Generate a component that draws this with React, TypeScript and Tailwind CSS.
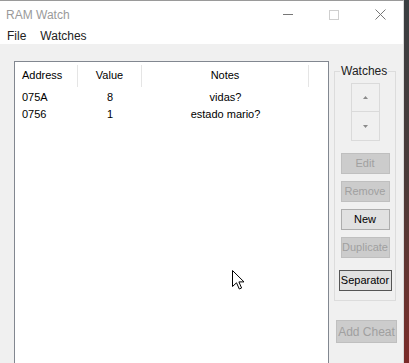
import React from "react";

const font = { fontFamily: '"Liberation Sans", Arial, sans-serif' };

const rows = [
  { address: "075A", value: "8", notes: "vidas?" },
  { address: "0756", value: "1", notes: "estado mario?" },
];

type BtnProps = { label: string; disabled?: boolean; isDefault?: boolean; className?: string };

function Btn({ label, disabled, isDefault, className = "" }: BtnProps) {
  let look = "bg-[#e1e1e1] border-[#adadad] text-black";
  if (disabled) look = "bg-[#cccccc] border-[#bfbfbf] text-[#a0a0a0]";
  if (isDefault) look = "bg-[#e1e1e1] border-[#555555] text-black";
  return (
    <div className={`flex items-center justify-center border text-[11px] leading-none ${look} ${className}`}>
      {label}
    </div>
  );
}

function Cursor() {
  return (
    <svg className="absolute left-[232px] top-[269px]" width="13" height="20" viewBox="0 0 13 20" aria-hidden="true">
      <path
        d="M0.5 0.5 L0.5 16.5 L4.5 12.8 L7.3 19 L9.6 18 L6.9 11.9 L12 11.9 Z"
        fill="#ffffff"
        stroke="#000000"
        strokeWidth="1"
        strokeLinejoin="miter"
      />
    </svg>
  );
}

export default function App() {
  return (
    <div className="flex w-[409px] h-[363px] overflow-hidden bg-[#2b2b2b]" style={font}>
      <div className="relative flex flex-col w-[404px] h-full border-t border-[#9a9a9a] border-r border-r-[#d9d9d9] bg-white">
        {/* title bar */}
        <div className="flex items-center h-[27px] shrink-0">
          <span className="pl-[6px] text-[12px] text-[#9a9a9a] flex-1">RAM Watch</span>
          <div className="flex h-full">
            <div className="w-[46px] flex items-center justify-center">
              <div className="w-[10px] h-px bg-[#777777]" />
            </div>
            <div className="w-[46px] flex items-center justify-center">
              <div className="w-[10px] h-[10px] border border-[#cfcfcf]" />
            </div>
            <div className="w-[46px] flex items-center justify-center">
              <svg width="11" height="11" viewBox="0 0 11 11" aria-hidden="true">
                <path d="M0.5 0.5 L10.5 10.5 M10.5 0.5 L0.5 10.5" stroke="#777777" strokeWidth="1" />
              </svg>
            </div>
          </div>
        </div>

        {/* menu bar */}
        <div className="flex items-center h-[16px] shrink-0 text-[12px] text-[#222222]">
          <span className="pl-[7px]">File</span>
          <span className="pl-[14px]">Watches</span>
        </div>

        {/* client */}
        <div className="flex flex-1 bg-[#f0f0f0] pl-[14px] pt-[17px]">
          {/* list */}
          <div className="w-[315px] h-[320px] shrink-0 bg-white border-l border-t border-r border-l-[#828790] border-t-[#828790] border-r-[#828790] text-[11px] text-black">
            <div className="flex h-[27px] items-center">
              <div className="w-[63px] h-[22px] flex items-center pl-[7px] border-r border-[#e5e5e5]">Address</div>
              <div className="w-[64px] h-[22px] flex items-center justify-center border-r border-[#e5e5e5]">Value</div>
              <div className="w-[167px] h-[22px] flex items-center justify-center border-r border-[#e5e5e5]">Notes</div>
            </div>
            {rows.map((r) => (
              <div key={r.address} className="flex h-[16.5px] items-center">
                <div className="w-[63px] pl-[7px]">{r.address}</div>
                <div className="w-[64px] text-center">{r.value}</div>
                <div className="w-[167px] text-center">{r.notes}</div>
              </div>
            ))}
          </div>

          {/* side panel */}
          <div className="flex flex-col ml-[5px] w-[64px]">
            <fieldset className="w-[62px] h-[236px] border border-[#dcdcdc] px-0 pb-0 mt-[4px]">
              <legend className="ml-[5px] px-[1px] text-[12px] leading-[13px] text-[#222222]">Watches</legend>
              <div className="flex flex-col items-center">
                <div className="flex flex-col mt-[5px] w-[29px]">
                  <div className="h-[29px] flex items-center justify-center border border-[#dadada] bg-[#f0f0f0]">
                    <svg width="5" height="3" viewBox="0 0 5 3" aria-hidden="true">
                      <path d="M2.5 0 L5 3 L0 3 Z" fill="#8a8a8a" />
                    </svg>
                  </div>
                  <div className="h-[29px] flex items-center justify-center border border-t-0 border-[#dadada] bg-[#f0f0f0]">
                    <svg width="5" height="3" viewBox="0 0 5 3" aria-hidden="true">
                      <path d="M0 0 L5 0 L2.5 3 Z" fill="#8a8a8a" />
                    </svg>
                  </div>
                </div>
                <div className="flex flex-col items-center gap-[7px] mt-[12px]">
                  <Btn label="Edit" disabled className="w-[49px] h-[21px]" />
                  <Btn label="Remove" disabled className="w-[49px] h-[21px]" />
                  <Btn label="New" className="w-[49px] h-[21px]" />
                  <Btn label="Duplicate" disabled className="w-[49px] h-[21px]" />
                  <Btn label="Separator" isDefault className="w-[53px] h-[21px] mt-[5px]" />
                </div>
              </div>
            </fieldset>
            <Btn label="Add Cheat" disabled className="w-[61px] h-[23px] mt-[19px] ml-[2px] text-[12px]" />
          </div>
        </div>
        <Cursor />
      </div>
      <div className="w-[5px] h-full bg-gradient-to-b from-[#3a3f42] via-[#4a3a38] to-[#7a2a28]" />
    </div>
  );
}
